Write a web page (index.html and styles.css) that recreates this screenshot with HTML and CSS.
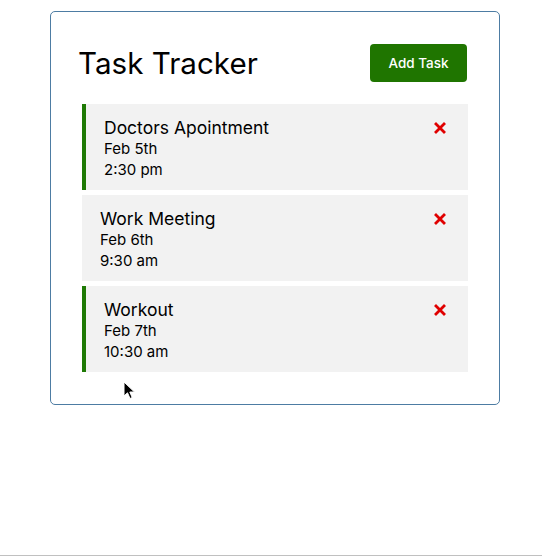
FILE: index.html
```html
<!DOCTYPE html>
<html lang="en">
<head>
<meta charset="utf-8">
<title>Task Tracker</title>
<link rel="stylesheet" href="styles.css">
</head>
<body>
<div class="page">
  <div class="container">
    <header class="header">
      <h1 class="title">Task Tracker</h1>
      <button class="btn">Add Task</button>
    </header>
    <div class="task reminder">
      <div class="task-head">
        <h3 class="task-title">Doctors Apointment</h3>
        <svg class="del" viewBox="0 0 12 12" width="12" height="12"><path d="M2 2 L10 10 M10 2 L2 10" stroke="#e00000" stroke-width="2.8" stroke-linecap="square"/></svg>
      </div>
      <p class="task-line">Feb 5th</p>
      <p class="task-line">2:30 pm</p>
    </div>
    <div class="task">
      <div class="task-head">
        <h3 class="task-title">Work Meeting</h3>
        <svg class="del" viewBox="0 0 12 12" width="12" height="12"><path d="M2 2 L10 10 M10 2 L2 10" stroke="#e00000" stroke-width="2.8" stroke-linecap="square"/></svg>
      </div>
      <p class="task-line">Feb 6th</p>
      <p class="task-line">9:30 am</p>
    </div>
    <div class="task reminder">
      <div class="task-head">
        <h3 class="task-title">Workout</h3>
        <svg class="del" viewBox="0 0 12 12" width="12" height="12"><path d="M2 2 L10 10 M10 2 L2 10" stroke="#e00000" stroke-width="2.8" stroke-linecap="square"/></svg>
      </div>
      <p class="task-line">Feb 7th</p>
      <p class="task-line">10:30 am</p>
    </div>
  </div>
  <svg class="cursor" width="13" height="19" viewBox="0 0 13 19"><path d="M1 1 L1 15 L4.5 11.8 L7 17.5 L9.2 16.5 L6.8 11 L11.5 11 Z" fill="#000" stroke="#fff" stroke-width="1"/></svg>
</div>
</body>
</html>
```
FILE: styles.css
```css
* { box-sizing: border-box; }
html, body { margin: 0; padding: 0; background: #fff; }
body { font-family: Inter, "Open Sans", sans-serif; color: #000; }
.page {
  position: relative;
  height: 556px;
  border-bottom: 1px solid #c0c0c0;
  padding-top: 11px;
}
.container {
  margin-left: 50px;
  width: 450px;
  border: 1px solid #4d7ca3;
  border-radius: 5px;
  padding: 32px 27px 32px 27px;
}
.header {
  display: flex;
  justify-content: space-between;
  align-items: center;
  margin-bottom: 22px;
  padding-right: 5px;
}
.title {
  margin: 0;
  font-size: 29.6px;
  font-weight: 400;
}
.btn {
  font-family: inherit;
  background: #1f7500;
  color: #fff;
  border: 0;
  border-radius: 4px;
  width: 97px;
  height: 38px;
  font-size: 13.5px;
  font-weight: 500;
  padding: 0;
}
.task {
  background: #f2f2f2;
  margin: 5px 4px 0 4px;
  height: 86px;
  padding: 13px 22px 0 18px;
}
.task.reminder { border-left: 4px solid #1f7a05; }
.task-head {
  display: flex;
  justify-content: space-between;
  align-items: center;
  height: 21px;
}
.task-title {
  margin: 0;
  font-size: 17.5px;
  font-weight: 400;
  line-height: 21px;
}
.task-line {
  margin: 0;
  font-size: 15px;
  line-height: 21px;
}
.cursor {
  position: absolute;
  left: 123px;
  top: 381px;
}
```
